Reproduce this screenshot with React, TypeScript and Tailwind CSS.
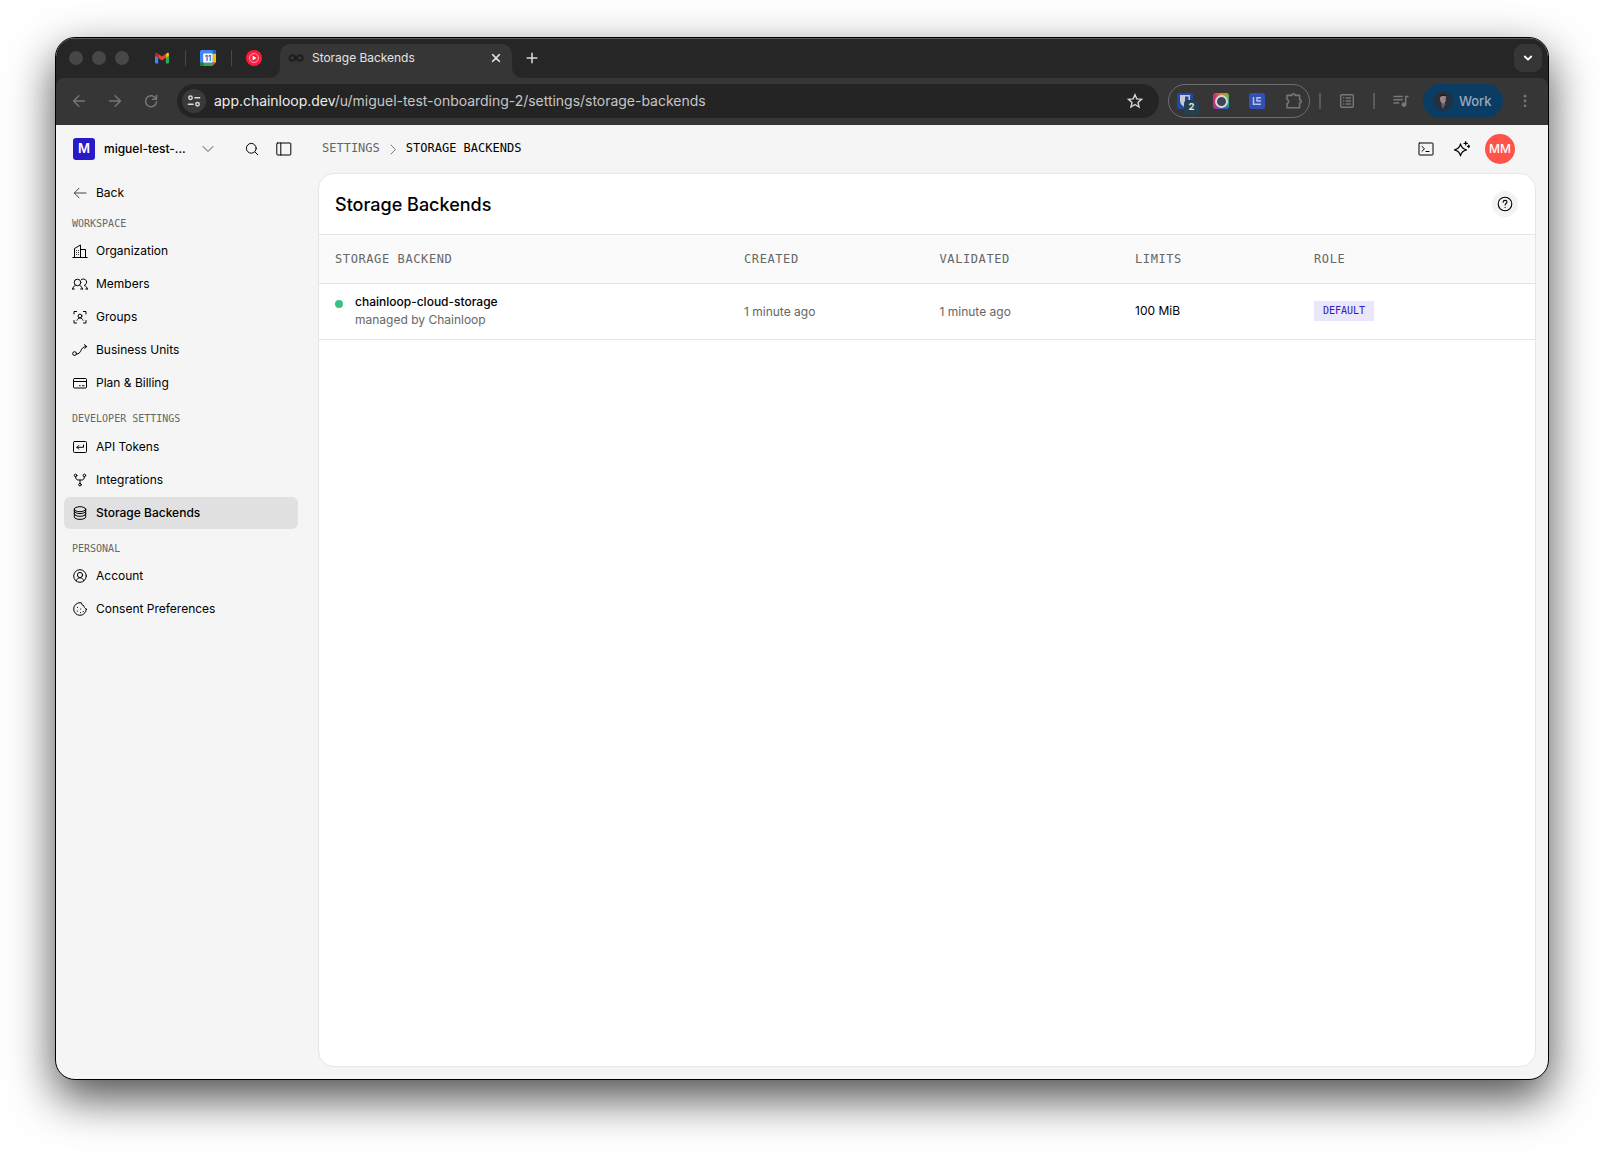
import type { ReactNode } from 'react';

type IconProps = { children: ReactNode; className?: string; sw?: number };

function Icon({ children, className = 'size-4', sw = 1 }: IconProps) {
  return (
    <svg
      viewBox="0 0 16 16"
      fill="none"
      stroke="currentColor"
      strokeWidth={sw}
      strokeLinecap="round"
      strokeLinejoin="round"
      className={`${className} shrink-0`}
    >
      {children}
    </svg>
  );
}

const icons: Record<string, ReactNode> = {
  back: <path d="M14 8H2.5M7 3.2 2.3 8 7 12.8" stroke="#444" />,
  organization: (
    <>
      <path d="M.8 14.5h14.4M2.5 14.5V5.500L8.500 2v12.500M8.500 6.500h5v8" />
      <path d="M4.500 7.500h.1M6.500 7.500h.1M4.500 9.500h.1M6.500 9.500h.1M4.500 11.500h.1M6.500 11.500h.1" strokeWidth=".9" />
    </>
  ),
  members: (
    <>
      <circle cx="5.500" cy="6.500" r="3.300" />
      <path d="M.5 13c.5-1.900 1.300-2.600 2.700-3.700M7.800 9.300c1.400 1.100 2.200 1.800 2.700 3.700M9.300 3.600a3.300 3.300 0 1 1 2.900 5.800c1.500.6 2.800 1.700 3.300 3.600" />
      <path d="M.5 13h1.800M8.700 13h1.800M13.700 13h1.800" />
    </>
  ),
  groups: (
    <>
      <path d="M2 5V2.500h2.500M11.500 2.500H14V5M14 11.500V14h-2.500M4.500 14H2v-2.500" />
      <circle cx="8" cy="7" r="1.900" />
      <path d="M5 11.300c.5-1.500 1.600-2.300 3-2.300s2.500.8 3 2.300" />
    </>
  ),
  units: (
    <>
      <circle cx="2.600" cy="11.600" r="1.900" />
      <path d="M4.500 12c5.500.6 3-7.500 9.800-7.500M12.300 2.600l2.400 1.900L12.800 6.500" />
    </>
  ),
  billing: (
    <>
      <rect x="1.500" y="3.500" width="13" height="9.500" rx="1" />
      <path d="M1.500 6.500h13M7.500 10.700h.7M10.500 10.700h1.500" />
    </>
  ),
  tokens: (
    <>
      <rect x="1.500" y="2.500" width="13" height="11" rx="1" />
      <path d="M11.500 6v2.300H5M6.700 6.500 4.900 8.300l1.800 1.800" />
    </>
  ),
  integrations: (
    <>
      <circle cx="3.600" cy="3.400" r="1.300" />
      <circle cx="12.400" cy="3.400" r="1.300" />
      <circle cx="8" cy="12.700" r="1.300" />
      <path d="M3.600 4.700c0 2.200 1 3.300 2.600 3.300h3.600c1.600 0 2.600-1.100 2.600-3.300M8 8v3.400" />
    </>
  ),
  storage: (
    <>
      <ellipse cx="8" cy="4.200" rx="5.700" ry="2.500" />
      <path d="M2.300 4.200v7.700c0 1.400 2.600 2.500 5.700 2.500s5.700-1.100 5.700-2.500V4.200M2.300 8.800c0 1.400 2.600 2.500 5.700 2.500s5.700-1.100 5.700-2.500M2.300 6.100C2.300 7.500 4.900 8.600 8 8.600s5.700-1.100 5.700-2.500" />
    </>
  ),
  account: (
    <>
      <circle cx="8" cy="8" r="6.300" />
      <circle cx="8" cy="7" r="2.600" />
      <path d="M4.200 12.800c.6-1.900 2-3 3.800-3s3.200 1.100 3.800 3" />
    </>
  ),
  cookie: (
    <path d="M14.300 8.200A6.300 6.300 0 1 1 8 1.700c.6 0 1 .1 1.500.2 0 1.500.7 2.600 2.300 2.700.1 1.500.9 2.500 2.500 3.600ZM5.500 6.300v.2M8.700 8v.2M5.300 10v.2M8.500 11.500v.2M11.200 10.500v.2" />
  ),
};

const sections = [
  {
    title: 'WORKSPACE',
    items: [
      { label: 'Organization', icon: 'organization' },
      { label: 'Members', icon: 'members' },
      { label: 'Groups', icon: 'groups' },
      { label: 'Business Units', icon: 'units' },
      { label: 'Plan & Billing', icon: 'billing' },
    ],
  },
  {
    title: 'DEVELOPER SETTINGS',
    items: [
      { label: 'API Tokens', icon: 'tokens' },
      { label: 'Integrations', icon: 'integrations' },
      { label: 'Storage Backends', icon: 'storage', active: true },
    ],
  },
  {
    title: 'PERSONAL',
    items: [
      { label: 'Account', icon: 'account' },
      { label: 'Consent Preferences', icon: 'cookie' },
    ],
  },
];

const mono = "font-['DejaVu_Sans_Mono',monospace]";
const grid = 'grid grid-cols-[409px_195.5px_195.5px_179px_1fr] pl-4';

function TabStrip() {
  return (
    <div className="flex h-10 items-center border-t border-[#5c5c5c] bg-[#262626] pb-px text-[#dcdcdc]">
      <div className="ml-[13px] flex gap-[9px]">
        <span className="size-3.5 rounded-full bg-[#474747]" />
        <span className="size-3.5 rounded-full bg-[#474747]" />
        <span className="size-3.5 rounded-full bg-[#474747]" />
      </div>
      <svg viewBox="0 0 16 16" className="ml-[25px] size-4">
        <path d="M1 4.300v8.200c0 .5.400.9.900.9h2.300V7.200z" fill="#4285f4" />
        <path d="M15 4.300v8.200c0 .5-.4.9-.9.9h-2.300V7.200z" fill="#34a853" />
        <path d="M11.800 4.300 13 3.100c.8-.6 2 0 2 1v1.400l-3.200 2.400z" fill="#fbbc04" />
        <path d="M4.200 7.800V3.700L8 6.500l3.800-2.800v4.100L8 10.600z" fill="#ea4335" />
        <path d="M1 4.100c0-1 1.200-1.600 2-1l1.200.9v3.900L1 5.500z" fill="#c5221f" />
      </svg>
      <span className="ml-[15px] h-4 w-px bg-[#474747]" />
      <svg viewBox="0 0 16 16" className="ml-3.5 size-4">
        <path d="M1.500 0h13A1.500 1.500 0 0 1 16 1.500V12l-4 4H1.500A1.500 1.500 0 0 1 0 14.500v-13A1.500 1.500 0 0 1 1.500 0Z" fill="#4285f4" />
        <path d="M12.500 4H16v8.500h-3.500z" fill="#fbbc04" />
        <path d="M3.500 12.500h9V16h-9z" fill="#34a853" />
        <path d="M0 12.500h3.500V16h-2A1.500 1.500 0 0 1 0 14.500z" fill="#188038" />
        <path d="M12.500 0h2A1.500 1.500 0 0 1 16 1.500v2h-3.500z" fill="#1967d2" />
        <path d="M12.500 12.500H16L12.500 16z" fill="#ea4335" />
        <path d="M3.200 3.500h9.300v9H3.200z" fill="#fff" />
        <text x="7.900" y="10.900" textAnchor="middle" fontSize="7.500" fontWeight="700" fontFamily="Inter, sans-serif" fill="#1a66d6">11</text>
      </svg>
      <span className="ml-[15px] h-4 w-px bg-[#474747]" />
      <svg viewBox="0 0 16 16" className="ml-3.5 size-4">
        <circle cx="8" cy="8" r="8" fill="#fb1b3c" />
        <circle cx="8" cy="8" r="4.500" fill="none" stroke="#ffc4cc" strokeWidth=".8" />
        <path d="m6.600 5.600 4 2.400-4 2.400z" fill="#fff" />
      </svg>
      <div className="relative -mb-px ml-[18px] flex h-[34px] w-[232px] items-center self-end rounded-t-[10px] bg-[#363636] pb-1.5">
        <svg viewBox="0 0 10 10" className="absolute -left-2.5 bottom-0 size-2.5 text-[#363636]">
          <path d="M10 0v10H0A10 10 0 0 0 10 0Z" fill="currentColor" />
        </svg>
        <svg viewBox="0 0 10 10" className="absolute -right-2.5 bottom-0 size-2.5 text-[#363636]">
          <path d="M0 0v10h10A10 10 0 0 1 0 0Z" fill="currentColor" />
        </svg>
        <svg viewBox="0 0 16 16" fill="none" stroke="#1d1d1d" strokeWidth="1.900" className="ml-2 size-4">
          <circle cx="4.300" cy="8" r="2.800" />
          <circle cx="11.700" cy="8" r="2.800" />
        </svg>
        <span className="ml-2 text-[12px] tracking-[-0.03px] text-[#e3e3e3]">Storage Backends</span>
        <Icon className="ml-auto mr-2 size-4" sw={1.5}>
          <path d="m4.600 4.600 6.800 6.800M11.400 4.600l-6.800 6.800" />
        </Icon>
      </div>
      <Icon className="ml-3 size-4" sw={1.5}>
        <path d="M8 3.200v9.600M3.200 8h9.600" />
      </Icon>
      <div className="ml-auto mr-1.5 flex size-7 items-center justify-center rounded-[9px] bg-[#363636] text-white">
        <Icon sw={1.800}>
          <path d="m4.800 6.500 3.200 3.200 3.200-3.200" />
        </Icon>
      </div>
    </div>
  );
}

function Toolbar() {
  return (
    <div className="bg-[#262626]">
      <div className="flex h-[47px] items-center rounded-t-lg bg-[#363636] pb-px text-[#777]">
        <Icon className="ml-[15px] size-4" sw={1.400}>
          <path d="M13.500 8H2.800M7.800 2.800 2.600 8l5.200 5.200" />
        </Icon>
        <Icon className="ml-5 size-4" sw={1.400}>
          <path d="M2.500 8h10.700M8.200 2.800 13.400 8l-5.200 5.200" />
        </Icon>
        <Icon className="ml-5 size-4" sw={1.500}>
          <path d="M13 5.800A5.500 5.500 0 1 0 13.500 8.800M13.500 2.300v3.900H9.600" />
        </Icon>

        <div className="ml-[18px] flex h-[34px] w-[982px] items-center rounded-full bg-[#242424] pl-[5px]">
          <div className="flex size-6 items-center justify-center rounded-full bg-[#393939] text-[#dcdcdc]">
            <Icon className="size-3.5" sw={1.600}>
              <circle cx="4" cy="4.300" r="2" />
              <circle cx="12" cy="11.700" r="2" />
              <path d="M9 4.300h5.500M1.500 11.700H7" />
            </Icon>
          </div>
          <span className="ml-2 pb-0.5 text-[14px] tracking-[-0.025px] text-[#c6c6c6]">
            <span className="text-[#ececec]">app.chainloop.dev</span>/u/miguel-test-onboarding-2/settings/storage-backends
          </span>
          <Icon className="ml-auto mr-4 size-4 text-[#d5d5d5]" sw={1.400}>
            <path strokeLinejoin="miter" d="m8 1.700 1.800 4.200 4.700.4-3.500 3.100 1 4.600-4-2.500L4 14l1-4.600-3.500-3.100 4.700-.4z" />
          </Icon>
        </div>

        <div className="ml-[9px] flex h-[34px] w-[142px] items-center rounded-full border border-[#6e6e6e] pl-2">
          <div className="relative size-4">
            <svg viewBox="0 0 16 16" className="size-4">
              <rect width="16" height="16" rx="2.500" fill="#244aa5" />
              <path d="M3 2h10v6c0 3-2.500 5-5 6.200C5.500 13 3 11 3 8z" fill="#c5cad6" />
              <path d="M8 3.500h3.500V8c0 2-1.700 3.400-3.500 4.300z" fill="#244aa5" />
            </svg>
            <span className="absolute left-[7px] top-[7px] flex size-[15px] items-center justify-center rounded bg-[#25404f] text-[9.500px] font-bold text-[#e4e4e4]">
              2
            </span>
          </div>
          <div className="ml-5 flex size-4 items-center justify-center rounded-[3px] bg-[conic-gradient(from_0deg,#e0803c,#7fae4a,#25a79b,#2b63c0,#9a3bb0,#c92f70,#cf2f6a,#e0803c)]">
            <span className="flex size-[13px] items-center justify-center rounded-full border-2 border-[#d8d8d8] bg-[#3b4757]" />
          </div>
          <svg viewBox="0 0 16 16" className="ml-5 size-4">
            <rect width="16" height="16" rx="2.500" fill="#3350b8" />
            <path d="M4.500 4v7.200H12M7.500 4.800H12M7.500 8H12M8 4.500v4" stroke="#b9c2de" strokeWidth="1.500" fill="none" />
          </svg>
          <Icon className="ml-5 size-[18px]" sw={1.400}>
            <path d="M1.800 3h4.400a1.400 1.400 0 0 1 2.800 0h4v4a1.400 1.400 0 0 1 0 2.800V14H1.800v-3.700a1.900 1.900 0 0 0 0-3.700z" />
          </Icon>
        </div>

        <span className="ml-[9px] h-4 w-0.5 bg-[#5a5a5a]" />
        <Icon className="ml-[18px] size-4" sw={1.400}>
          <rect x="1.700" y="1.700" width="12.600" height="12.600" rx="1" />
          <path d="M4.500 5h.2M4.500 8h.2M4.500 11h.2M7.200 5h4.300M7.200 8h4.300M7.200 11h4.300" />
        </Icon>
        <span className="ml-[18px] h-4 w-0.5 bg-[#5a5a5a]" />
        <Icon className="ml-[18px] size-4" sw={1.500}>
          <path strokeLinecap="butt" d="M.5 3.500h9.300M.5 6.700h9.300M.5 9.900h5.800M15.500 3.500h-2.800v8" />
          <circle cx="11" cy="11.600" r="1.700" fill="currentColor" />
        </Icon>
        <div className="ml-3.5 flex h-[34px] w-20 items-center rounded-full bg-[#0b3d64] pl-2.5 text-[#98a9b7]">
          <svg viewBox="0 0 20 20" className="size-5">
            <circle cx="10" cy="10" r="10" fill="#23303d" />
            <path d="M6.800 5.500C7 3 12 2.600 13 5.200l-.3 4.500-1.500 3.200-2 .1-2-3z" fill="#a08088" />
            <path d="M6.400 7C6 2.600 12.500 1.500 13.500 5.500L11 4.800 8 5.200z" fill="#15181e" />
            <path d="m8 12.500 1.500 5.500 3.500-5.200z" fill="#6d5963" />
          </svg>
          <span className="ml-1.5 pt-0.5 text-[13px] font-medium tracking-[-0.1px]">Work</span>
        </div>
        <svg viewBox="0 0 4 16" fill="currentColor" className="ml-5 h-4 w-1">
          <circle cx="2" cy="3.200" r="1.400" />
          <circle cx="2" cy="8" r="1.400" />
          <circle cx="2" cy="12.800" r="1.400" />
        </svg>
      </div>
    </div>
  );
}

function Sidebar() {
  return (
    <aside className="w-[262px] shrink-0 pl-2 pr-5 pt-2">
      <div className="flex h-8 items-center pl-[9px]">
        <span className="flex size-[22px] items-center justify-center rounded-[3px] bg-[#2819c9] text-[13px] font-semibold text-white">M</span>
        <span className="ml-[9px] w-[90px] text-[12px] font-medium">miguel-test-...</span>
        <Icon className="ml-1.5 size-4 text-[#555]">
          <path d="m3 5.500 5 5 5-5" />
        </Icon>
        <Icon className="ml-7 size-4">
          <circle cx="7.300" cy="7.300" r="4.900" />
          <path d="m11 11 2.800 2.800" />
        </Icon>
        <Icon className="ml-4 size-4">
          <rect x=".8" y="2" width="14" height="12" rx=".8" />
          <path d="M4.800 2v12" />
        </Icon>
      </div>
      <a className="mt-3 flex h-8 items-center gap-2 px-2 text-[12px]">
        <Icon>{icons.back}</Icon>
        Back
      </a>
      <nav>
        {sections.map((section) => (
          <div key={section.title} className="mb-[5.5px]">
            <h2 className={`${mono} flex h-[26px] items-center pl-2 pt-0.5 text-[10px] text-[#666]`}>{section.title}</h2>
            <ul className="flex flex-col gap-px">
              {section.items.map((item) => (
                <li
                  key={item.label}
                  className={`flex h-8 items-center gap-2 rounded-md px-2 text-[12px] ${
                    'active' in item ? 'bg-[#e1e1e1] font-medium' : ''
                  }`}
                >
                  <Icon>{icons[item.icon]}</Icon>
                  {item.label}
                </li>
              ))}
            </ul>
          </div>
        ))}
      </nav>
    </aside>
  );
}

function TopBar() {
  return (
    <header className="flex h-12 items-center">
      <div className={`${mono} ml-1 flex items-center text-[12px]`}>
        <span className="pb-0.5 text-[#666]">SETTINGS</span>
        <Icon className="mx-[5px] size-4 text-[#777]">
          <path d="m6 4 4.500 4.500L6 13" />
        </Icon>
        <span className="pb-0.5">STORAGE BACKENDS</span>
      </div>
      <Icon className="ml-auto size-4">
        <rect x="1" y="2" width="14" height="12" rx=".6" />
        <path d="m4 5.500 2.500 2.300L4 10.200M8 10.500h3" />
      </Icon>
      <Icon className="ml-5 size-4" sw={1.200}>
        <path d="M6.500 2.800c.7 3.600 2 5 6 6-4 1-5.300 2.400-6 6-.7-3.600-2-5-6-6 4-1 5.300-2.400 6-6Z" />
        <path d="M11.700.6v3.400M10 2.300h3.400M14.700 4.200v2.400M13.500 5.400h2.400" />
      </Icon>
      <span className="ml-[15px] mr-[33px] flex size-[30px] items-center justify-center rounded-full bg-[#ff5248] text-[12px] font-medium text-white">
        MM
      </span>
    </header>
  );
}

function BackendsPanel() {
  return (
    <main className="h-[894px] w-[1218px] overflow-hidden rounded-2xl border border-[#e5e5e5] bg-white">
      <div className="flex h-[60px] items-center justify-between pl-4 pr-[17px]">
        <h1 className="text-[18px] font-medium">Storage Backends</h1>
        <span className="flex size-[26px] items-center justify-center rounded-full bg-[#f3f3f3]">
          <Icon sw={1.100}>
            <circle cx="8" cy="8" r="6.800" />
            <path d="M6.100 6.300C6.200 5 7 4.400 8.100 4.400s1.900.7 1.900 1.700c0 1.500-1.900 1.400-1.900 2.900M8.100 11.200v.2" />
          </Icon>
        </span>
      </div>
      <div className={`${grid} ${mono} h-[50px] items-center border-y border-[#e5e5e5] bg-[#fafafa] text-[12px] tracking-[0.6px] text-[#666]`}>
        <span>STORAGE BACKEND</span>
        <span>CREATED</span>
        <span>VALIDATED</span>
        <span>LIMITS</span>
        <span>ROLE</span>
      </div>
      <div className={`${grid} h-14 items-center border-b border-[#e5e5e5] pb-0.5 text-[12px]`}>
        <div className="flex gap-3">
          <span className="mt-[7px] size-2 rounded-full bg-[#3dbf85]" />
          <div className="leading-[18px]">
            <p className="font-medium">chainloop-cloud-storage</p>
            <p className="text-[#666]">managed by Chainloop</p>
          </div>
        </div>
        <span className="pt-[3px] text-[#666]">1 minute ago</span>
        <span className="pt-[3px] text-[#666]">1 minute ago</span>
        <span>100 MiB</span>
        <span>
          <span className={`${mono} flex h-5 w-[60px] items-center justify-center bg-[#e9e7f9] text-[10px] text-[#2c20c0]`}>
            DEFAULT
          </span>
        </span>
      </div>
    </main>
  );
}

export default function App() {
  return (
    <div className="h-[1153px] w-[1604px] overflow-hidden bg-white pl-[55px] pt-[37px] font-['Inter',sans-serif] text-black">
      <div className="h-[1043px] w-[1494px] overflow-hidden rounded-[20px] border border-black bg-[#f5f5f5] shadow-[0_18px_46px_rgba(0,0,0,0.7)]">
        <TabStrip />
        <Toolbar />
        <div className="flex">
          <Sidebar />
          <div className="flex-1">
            <TopBar />
            <BackendsPanel />
          </div>
        </div>
      </div>
    </div>
  );
}
